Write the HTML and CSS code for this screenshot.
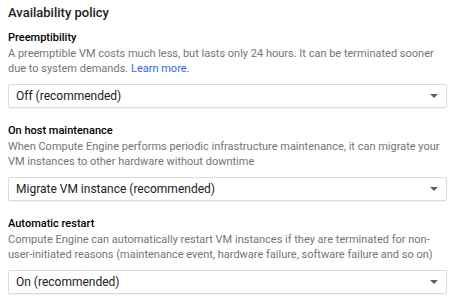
FILE: index.html
```html
<!DOCTYPE html>
<html>
<head>
<meta charset="utf-8">
<link rel="stylesheet" href="styles.css">
</head>
<body>
<div class="panel">
  <h2 class="title">Availability policy</h2>
  <div class="field">
    <div class="label">Preemptibility</div>
    <div class="desc">A preemptible VM costs much less, but lasts only 24 hours. It can be terminated sooner due to system demands. <a class="link" href="#">Learn more.</a></div>
    <div class="select"><span>Off (recommended)</span><svg class="caret" width="8" height="4" viewBox="0 0 8 4"><path d="M0 0h8L4 4z" fill="#5f5f5f"/></svg></div>
  </div>
  <div class="field">
    <div class="label">On host maintenance</div>
    <div class="desc">When Compute Engine performs periodic infrastructure maintenance, it can migrate your VM instances to other hardware without downtime</div>
    <div class="select"><span>Migrate VM instance (recommended)</span><svg class="caret" width="8" height="4" viewBox="0 0 8 4"><path d="M0 0h8L4 4z" fill="#5f5f5f"/></svg></div>
  </div>
  <div class="field">
    <div class="label">Automatic restart</div>
    <div class="desc">Compute Engine can automatically restart VM instances if they are terminated for non-user-initiated reasons (maintenance event, hardware failure, software failure and so on)</div>
    <div class="select"><span>On (recommended)</span><svg class="caret" width="8" height="4" viewBox="0 0 8 4"><path d="M0 0h8L4 4z" fill="#5f5f5f"/></svg></div>
  </div>
</div>
</body>
</html>
```
FILE: styles.css
```css
html, body { margin: 0; padding: 0; background: #fff; }
body { font-family: Roboto, "Liberation Sans", Arial, sans-serif; color: #212121; }
.panel { padding: 5px 0 0 8px; width: 439px; }
.title { font-size: 13px; font-weight: 500; margin: 0 0 9px 0; line-height: 16px; color: #212121; }
.field { display: flex; flex-direction: column; margin-bottom: 15px; }
.label { font-size: 11px; font-weight: 500; line-height: 16px; color: #000; }
.desc { font-size: 11px; line-height: 15px; color: #757575; }
.link { color: #3367d6; text-decoration: none; }
.select { margin-top: 8px; height: 24px; box-sizing: border-box; border: 1px solid #dcdcdc; border-radius: 2px; display: flex; align-items: center; justify-content: space-between; padding: 0 8px 0 7px; font-size: 12px; color: #212121; box-shadow: 0 1px 1px rgba(0,0,0,0.05); }
.caret { display: block; }
```
